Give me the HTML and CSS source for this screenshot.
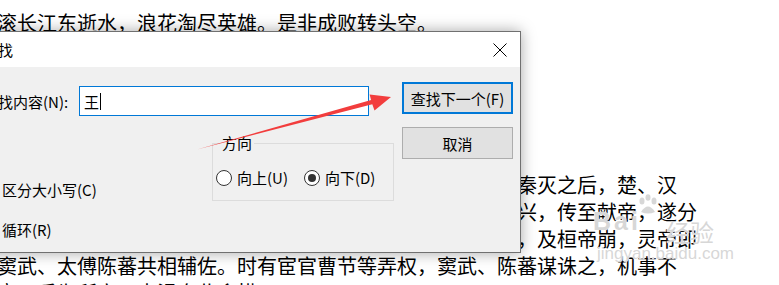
FILE: index.html
```html
<!DOCTYPE html>
<html lang="zh-CN">
<head>
  <meta charset="UTF-8">
  <title>查找</title>
  <link rel="stylesheet" href="styles.css">
</head>
<body>
  <!-- document text behind the dialog -->
  <div class="doc">
    <p class="line">滚长江东逝水，浪花淘尽英雄。是非成败转头空。</p>
    <p class="line">青山依旧在，几度夕阳红。</p>
    <p class="line">白发渔樵江渚上，惯看秋月春风。</p>
    <p class="line">一壶浊酒喜相逢。</p>
    <p class="line">古今多少事，都付笑谈中。</p>
    <p class="line">第一回　宴桃园豪杰三结义</p>
    <p class="line">大势，分久必合，合久必分。周末七国分争，并入于秦。及秦灭之后，楚、汉</p>
    <p class="line">入于汉。汉朝自高祖斩白蛇而起义，一统天下，后来光武中兴，传至献帝，遂分</p>
    <p class="line">其致乱之由，殆始于桓、灵二帝。桓帝禁锢善类，崇信宦官，及桓帝崩，灵帝即</p>
    <p class="line">窦武、太傅陈蕃共相辅佐。时有宦官曹节等弄权，窦武、陈蕃谋诛之，机事不</p>
    <p class="line">密，反为所害，中涓自此愈横。</p>
  </div>

  <!-- baidu jingyan watermark -->
  <div class="watermark">
    <div class="wm-top">
      <span class="wm-bai">Bai</span>
      <svg class="wm-paw" width="22" height="20" viewBox="0 0 22 20">
        <ellipse cx="5" cy="7" rx="2.5" ry="3.5"/>
        <ellipse cx="11" cy="3.5" rx="2.5" ry="3.3"/>
        <ellipse cx="17" cy="7" rx="2.5" ry="3.5"/>
        <path d="M4 18 Q11 7 18 18 Q11 21 4 18 Z"/>
      </svg>
      <span class="wm-jy">经验</span>
    </div>
    <div class="wm-url">jingyan.baidu.com</div>
  </div>

  <!-- find dialog -->
  <div class="dialog">
    <div class="titlebar">
      <span class="title">查找</span>
      <svg class="close" width="14" height="14" viewBox="0 0 14 14">
        <path d="M0.5 0.5 L13.5 13.5 M13.5 0.5 L0.5 13.5" stroke="#000" stroke-width="1"/>
      </svg>
    </div>
    <div class="dialog-body">
      <div class="main">
        <div class="find-row">
          <label class="find-label">查找内容(N):</label>
          <div class="input"><span>王</span><span class="caret"></span></div>
        </div>
        <div class="options">
          <div class="checks">
            <div class="check"><span class="box"></span>区分大小写(C)</div>
            <div class="check"><span class="box"></span>循环(R)</div>
          </div>
          <fieldset class="group">
            <legend>方向</legend>
            <div class="radios">
              <div class="radio"><span class="dot"></span>向上(U)</div>
              <div class="radio"><span class="dot checked"></span>向下(D)</div>
            </div>
          </fieldset>
        </div>
      </div>
      <div class="buttons">
        <button class="btn default">查找下一个(F)</button>
        <button class="btn">取消</button>
      </div>
    </div>
  </div>

  <!-- red annotation arrow -->
  <svg class="arrow" width="779" height="285" viewBox="0 0 779 285">
    <polygon points="197,149.5 371.1,100.1 369.6,94.5 391,97 374.5,110.5 372.3,104.3" fill="#f23d3d"/>
  </svg>
</body>
</html>
```

FILE: styles.css
```css
body {
  margin: 0;
  width: 779px;
  height: 285px;
  overflow: hidden;
  position: relative;
  background: #fff;
  font-family: "Noto Sans CJK SC", "Noto Sans", sans-serif;
}
.doc {
  margin-left: -3px;
  padding-top: 9px;
  font-size: 20px;
  line-height: 27px;
  color: #000;
}
.line {
  margin: 0;
  white-space: nowrap;
}
.watermark {
  position: absolute;
  left: 593px;
  top: 192px;
  color: rgba(205, 205, 205, 0.8);
  font-family: "Liberation Sans", Arial, sans-serif;
  text-shadow: 0 0 1px #fff, 0 0 1px #fff;
}
.wm-top {
  display: flex;
  align-items: flex-start;
  height: 52px;
}
.wm-bai {
  font-size: 25px;
  font-weight: bold;
  line-height: 26px;
  letter-spacing: 3px;
  margin-top: 16px;
}
.wm-paw {
  fill: rgba(205, 205, 205, 0.8);
  margin: 2px 0 0 -4px;
}
.wm-jy {
  font-family: "Noto Sans CJK SC", sans-serif;
  font-size: 24px;
  line-height: 30px;
  margin: 25px 0 0 7px;
}
.wm-url {
  font-size: 17px;
  line-height: 20px;
  margin: 0 0 0 4px;
}
.dialog {
  position: absolute;
  left: -30px;
  top: 31px;
  width: 549px;
  height: 220px;
  border: 1px solid #707070;
  background: #f0f0f0;
  box-shadow: 0 0 14px rgba(0, 0, 0, 0.35);
  font-size: 15px;
  color: #000;
}
.titlebar {
  height: 35px;
  background: #fff;
  display: flex;
  align-items: center;
  justify-content: space-between;
  padding: 0 13px 0 12px;
}
.title {
  font-size: 15px;
}
.dialog-body {
  display: flex;
  padding: 15px 0 0 12px;
}
.main {
  width: 411px;
  flex-shrink: 0;
}
.find-row {
  display: flex;
  align-items: center;
  margin-top: 4px;
}
.find-label {
  width: 96px;
}
.input {
  width: 285px;
  height: 28px;
  border: 1px solid #0078d7;
  background: #fff;
  display: flex;
  align-items: center;
  padding-left: 3px;
}
.input span:first-child {
  margin-left: 1px;
}
.caret {
  width: 1px;
  height: 17px;
  background: #000;
  margin-left: 1px;
}
.options {
  display: flex;
  margin-top: 18px;
}
.checks {
  width: 229px;
  flex-shrink: 0;
  padding-top: 45px;
  display: flex;
  flex-direction: column;
  gap: 20px;
}
.check {
  display: flex;
  align-items: center;
  height: 20px;
}
.box {
  width: 13px;
  height: 13px;
  border: 1px solid #333;
  background: #fff;
  margin-right: 6px;
  box-sizing: border-box;
}
.group {
  width: 182px;
  height: 67px;
  box-sizing: border-box;
  margin: 0;
  padding: 0 0 0 3px;
  border: 1px solid #dcdcdc;
}
.group legend {
  padding: 0 2px;
  margin-left: 4px;
  line-height: 18px;
}
.radios {
  display: flex;
  gap: 16px;
  margin-top: 15px;
}
.radio {
  display: flex;
  align-items: center;
}
.dot {
  width: 16px;
  height: 16px;
  border: 1px solid #333;
  border-radius: 50%;
  background: #fff;
  box-sizing: border-box;
  margin-right: 5px;
  display: flex;
  align-items: center;
  justify-content: center;
}
.dot.checked::after {
  content: "";
  width: 8px;
  height: 8px;
  border-radius: 50%;
  background: #333;
}
.buttons {
  margin-left: 8px;
  display: flex;
  flex-direction: column;
  gap: 13px;
}
.btn {
  width: 111px;
  height: 32px;
  box-sizing: border-box;
  border: 1px solid #adadad;
  background: #e1e1e1;
  font-family: "Noto Sans CJK SC", "Noto Sans", sans-serif;
  font-size: 15px;
  color: #000;
  padding: 0;
}
.btn.default {
  border: 2px solid #0078d7;
}
.arrow {
  position: absolute;
  left: 0;
  top: 0;
  pointer-events: none;
}
```
